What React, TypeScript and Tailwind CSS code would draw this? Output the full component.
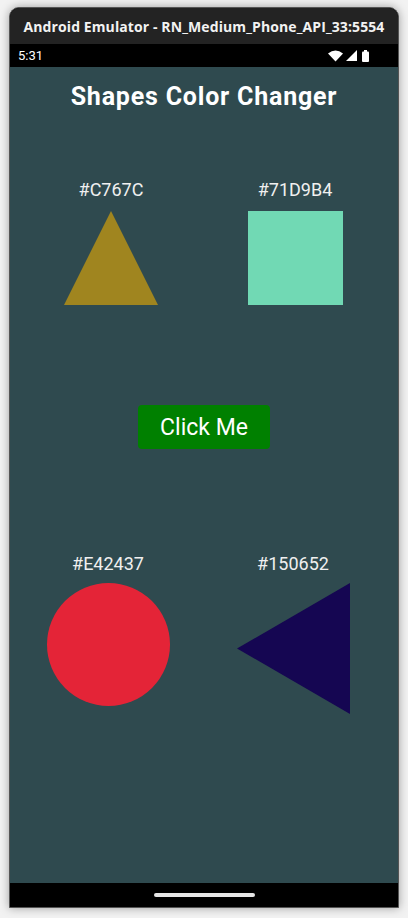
import React from "react";

export default function App() {
  return (
    <div className="min-h-screen w-[408px] bg-[#f2f2f2] pt-[7px] pl-[9px]" style={{ fontFamily: "Roboto, 'Noto Sans', sans-serif" }}>
      <div className="w-[390px] h-[901px] rounded-t-[10px] overflow-hidden flex flex-col border border-[#555] shadow-[0_0_10px_rgba(0,0,0,0.35)] bg-black">
        {/* Title bar */}
        <div className="h-[36px] bg-[#232323] flex items-center justify-center shrink-0">
          <span className="text-[#f2f2f2] text-[14px] font-bold tracking-[0.1px]" style={{ fontFamily: "'Open Sans', 'DejaVu Sans', sans-serif" }}>
            Android Emulator - RN_Medium_Phone_API_33:5554
          </span>
        </div>
        {/* Status bar */}
        <div className="h-[23px] bg-black flex items-center justify-between pl-[8px] pr-[29px] shrink-0">
          <span className="text-white text-[13px] leading-none">5:31</span>
          <div className="flex items-center gap-[3px]">
            <svg width="15" height="12" viewBox="0 0 15 12">
              <path d="M0 3.5 Q7.5 -2.5 15 3.5 L7.5 11.5 Z" fill="white" />
            </svg>
            <svg width="11" height="11" viewBox="0 0 11 11">
              <path d="M11 0 L11 11 L0 11 Z" fill="white" />
            </svg>
            <svg width="7" height="12" viewBox="0 0 7 12" className="ml-[2px]">
              <rect x="2" y="0" width="3" height="2" fill="white" />
              <rect x="0" y="1.5" width="7" height="10.5" rx="1" fill="white" />
            </svg>
          </div>
        </div>
        {/* Content */}
        <div className="flex-1 bg-[#2f4a4f] flex flex-col">
          <h1 className="mt-[16px] text-white text-[25px] leading-[28px] font-bold text-center tracking-[0.8px]">Shapes Color Changer</h1>

          {/* Row 1 */}
          <div className="flex mt-[68px] ml-[36px]">
            <div className="w-[130px] flex flex-col items-center">
              <span className="text-[#f0f0f0] text-[18px] leading-[21px]">#C767C</span>
              <svg width="94" height="94" viewBox="0 0 94 94" className="mt-[11px]">
                <polygon points="47,0 94,94 0,94" fill="#a0851f" />
              </svg>
            </div>
            <div className="w-[130px] ml-[54px] flex flex-col items-center">
              <span className="text-[#f0f0f0] text-[18px] leading-[21px]">#71D9B4</span>
              <div className="mt-[11px] w-[95px] h-[94px] bg-[#71d9b4]" />
            </div>
          </div>

          {/* Button */}
          <div className="flex justify-center mt-[100px]">
            <button className="w-[132px] h-[44px] rounded-[4px] bg-[#008000] text-white text-[23px] leading-none">Click Me</button>
          </div>

          {/* Row 2 */}
          <div className="flex mt-[104px] ml-[33px]">
            <div className="w-[130px] flex flex-col items-center">
              <span className="text-[#f0f0f0] text-[18px] leading-[21px]">#E42437</span>
              <div className="mt-[9px] w-[123px] h-[123px] rounded-full bg-[#e42437]" />
            </div>
            <div className="w-[130px] ml-[55px] flex flex-col items-center">
              <span className="text-[#f0f0f0] text-[18px] leading-[21px]">#150652</span>
              <svg width="113" height="131" viewBox="0 0 113 131" className="mt-[9px]">
                <polygon points="113,0 113,131 0,65.5" fill="#150652" />
              </svg>
            </div>
          </div>
        </div>
        {/* Nav bar */}
        <div className="h-[24px] bg-black flex items-center justify-center shrink-0">
          <div className="w-[101px] h-[4px] rounded-full bg-[#e6e6e6]" />
        </div>
      </div>
    </div>
  );
}
